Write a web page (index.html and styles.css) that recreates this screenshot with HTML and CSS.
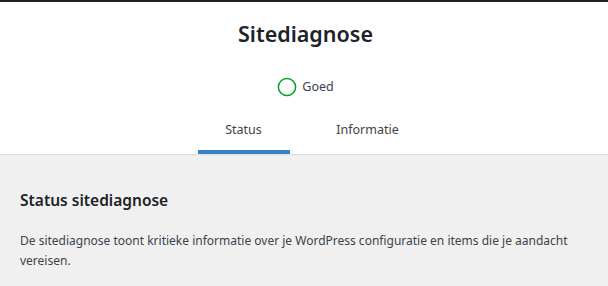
FILE: index.html
```html
<!DOCTYPE html>
<html lang="nl">
<head>
    <meta charset="UTF-8">
    <meta name="viewport" content="width=device-width, initial-scale=1.0">
    <title>Sitediagnose</title>
    <link rel="stylesheet" href="styles.css">
</head>
<body>

    <div class="health-header">
        <div class="title-section">
            <h1>Sitediagnose</h1>
        </div>

        <div class="progress-wrapper">
            <svg class="progress-circle" width="20" height="20" viewBox="0 0 20 20" aria-hidden="true">
                <circle cx="10" cy="10" r="8.6" fill="none" stroke="#00a32a" stroke-width="1.5"></circle>
            </svg>
            <span class="progress-label">Goed</span>
        </div>

        <nav class="tabs-wrapper">
            <a href="#" class="tab active">Status</a>
            <a href="#" class="tab">Informatie</a>
        </nav>
    </div>

    <div class="health-body">
        <h2>Status sitediagnose</h2>
        <p>De sitediagnose toont kritieke informatie over je WordPress configuratie en items die je aandacht vereisen.</p>
    </div>

</body>
</html>
```

FILE: styles.css
```css
body {
    margin: 0;
    background-color: #f0f0f1;
    color: #3c434a;
    font-family: "Segoe UI", "Noto Sans", sans-serif;
    font-size: 12px;
    line-height: 1.4;
    border-top: 2px solid #1d2327;
}
.health-header {
    background-color: #fff;
    border-bottom: 1px solid #dcdcde;
    text-align: center;
    padding-left: 3px;
}
.title-section h1 {
    display: inline-block;
    margin: 0 0 25px;
    padding: 18px 0 4px;
    font-size: 21.5px;
    font-weight: 600;
    line-height: 1.3;
    color: #1d2327;
}
.progress-wrapper {
    display: flex;
    justify-content: center;
    align-items: center;
    gap: 5px;
    margin-bottom: 16px;
}
.progress-label {
    font-size: 12.5px;
    color: #3c434a;
}
.tabs-wrapper {
    display: inline-grid;
    grid-template-columns: 124px 124px;
}
.tab {
    display: block;
    margin: 0 16px;
    padding: 8px 0 16px;
    color: #3c434a;
    text-decoration: none;
    font-size: 12.5px;
}
.tab.active {
    box-shadow: inset 0 -4px #3582c4;
}
.health-body {
    padding: 20px 20px;
}
.health-body h2 {
    margin: 15px 0 19px;
    font-size: 15.5px;
    font-weight: 600;
    color: #1d2327;
}
.health-body p {
    margin: 0;
    line-height: 19.5px;
}
```
